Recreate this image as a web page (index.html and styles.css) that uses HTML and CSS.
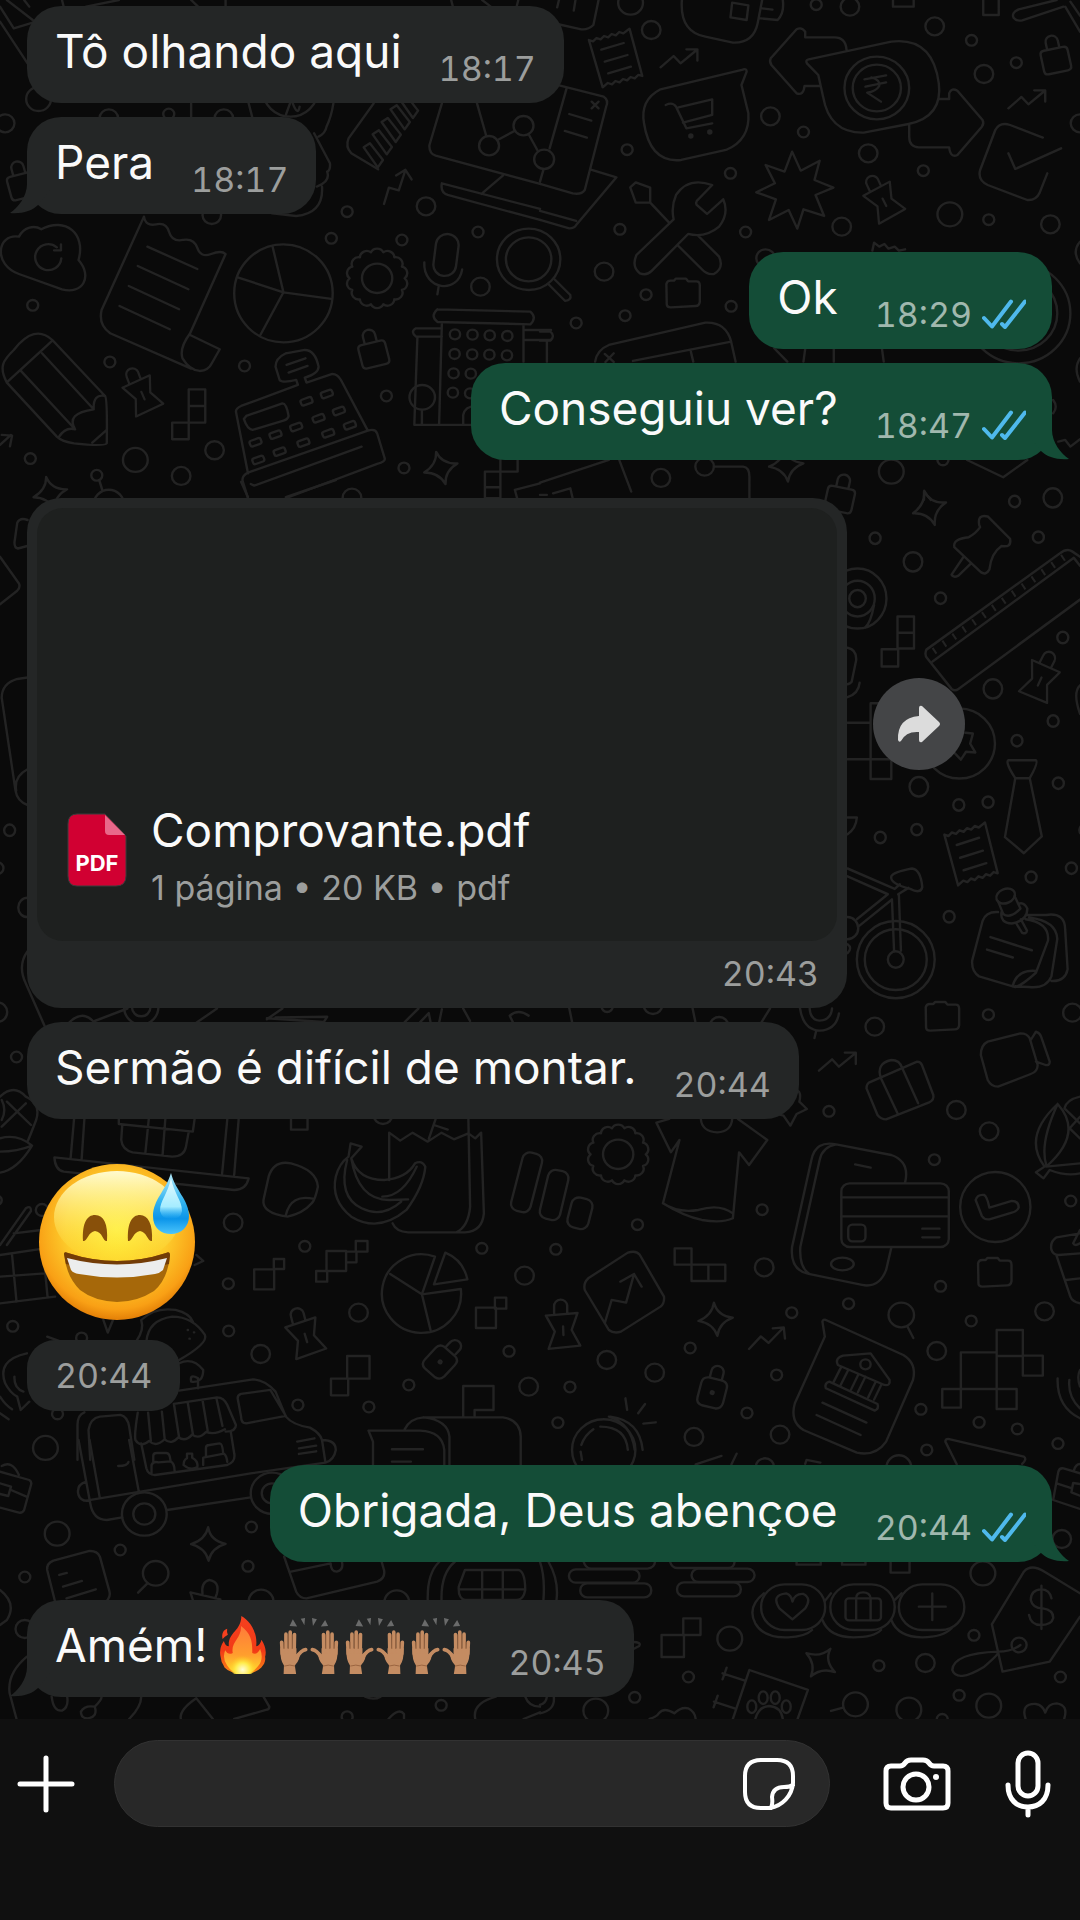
FILE: index.html
```
<!DOCTYPE html>
<html lang="pt-BR">
<head>
  <meta charset="UTF-8" />
  <meta name="viewport" content="width=device-width, initial-scale=1.0"/>
  <title>Conversa</title>
  <link rel="stylesheet" href="styles.css">
</head>
<body>

  <main class="chat">
    <!-- doodle wallpaper, drawn in tiles -->
    <svg class="wallpaper" viewBox="0 0 1080 1720" preserveAspectRatio="xMidYMin slice" aria-hidden="true">
      <defs>
        <circle id="s" r="16"/>
        <circle id="m" r="27"/>
        <circle id="l" r="36"/>
        <g id="gear"><circle r="44"/><path d="M80 0A20 20 0 0 1 72 35A20 20 0 0 1 50 63A20 20 0 0 1 18 78A20 20 0 0 1-18 78A20 20 0 0 1-50 63A20 20 0 0 1-72 35A20 20 0 0 1-80 0A20 20 0 0 1-72-35A20 20 0 0 1-50-63A20 20 0 0 1-18-78A20 20 0 0 1 18-78A20 20 0 0 1 50-63A20 20 0 0 1 72-35A20 20 0 0 1 80 0"/></g>
        <path id="lock" d="M-28-22h56q12 0 12 12v48q0 12-12 12h-56q-12 0-12-12v-48q0-12 12-12M-18-22v-22a18 18 0 0 1 36 0v22"/>
        <path id="padlock" d="M-20-42h40q18 2 18 20v46q-2 18-18 20h-40q-18-2-18-20v-46q0-18 18-20M-18-42v-22a18 18 0 0 1 36 0v22M-4 0a4 4 0 0 0 8 0a4 4 0 0 0-8 0"/>
        <path id="clip" d="M-26-50v-24a19 19 0 0 1 38-2v22M-50-46L42-54L25-3L50 44L-42 54L-24 2ZM0-14l1 26"/>
        <path id="zig" d="M0 0L38-34L58-12L105-52M75-54h32v34"/>
        <path id="spark" d="M-5-50Q5-10 50-5Q10 10 5 50Q-8 12-50 5Q-10-12-5-50Z"/>
        <path id="folder" d="M-48-30q2-10 12-10h10l5-6h30l6 8h24q10 0 10 12v50q-2 12-12 12l-72 4q-12 0-12-10z"/>
        <path id="note" d="M-78-55l12 4 10-10 12 4 10-10 12 4 10-10 12 4 10-10 12 4 18-14L77 53l-12-3-10 10-12-4-10 10-12-4-10 10-12-4-10 10-12-4-15 13zM-42-26l65-20M-32 10l66-20M-22 45l66-20"/>
        <rect id="key" x="-17" y="-9" width="34" height="18" rx="6" transform="rotate(-20)"/>
        <path id="bar" d="M0 0l18-12l38 50l-15 22z"/>
      </defs>

      <g transform="scale(.3444 .3333)">
        <use href="#s" x="490" y="342"/><use href="#s" x="1008" y="635"/><use href="#s" x="962" y="715"/><use href="#s" x="1167" y="720"/>
        <use href="#s" x="1388" y="696"/><use href="#s" x="95" y="916"/><use href="#s" x="319" y="1086"/><use href="#s" x="710" y="1098"/>
        <use href="#s" x="1122" y="1188"/><use href="#s" x="88" y="1376"/><use href="#s" x="1173" y="1404"/><use href="#s" x="281" y="1426"/>
        <use href="#m" x="15" y="370"/><use href="#m" x="1237" y="619"/><use href="#m" x="1395" y="860"/><use href="#m" x="623" y="1351"/>
        <use href="#m" x="526" y="1428"/><use href="#m" x="316" y="355"/><use href="#m" x="650" y="355"/><use href="#m" x="615" y="645"/>
        <use href="#m" x="1022" y="1493"/><use href="#l" x="112" y="297"/><use href="#l" x="393" y="1380"/>
        <path d="M0 65L80 190M0 20L40 85L95 68M20 0L95 60M250 20l95-20M70 0l15 20M180 0l5 20M555 0l20 20M655 0v20M1310 0l5 20M1400 0l25 20M1500 20l5-20"/>
        <path d="M555 350V310M722 310q5 20 10 40M968 310Q962 350 948 380Q945 400 925 410M912 400L958 490Q960 510 950 515Q960 545 920 560M935 560Q940 640 860 648L790 640"/>
        <circle cx="843" cy="270" r="80"/><path d="M830 345l12-35M850 310q15 40 20 10"/>
        <path d="M55 710C70 680 100 675 120 688C190 650 250 700 228 780C270 830 240 885 180 868L55 822C-20 795-10 700 55 710M178 775A38 39 0 1 1 165 742M177 733v18h-20"/>
        <path d="M418 650q5 30 35 23t38 23t40 24t42 24t40 18t42 0L552 1000Q520 1045 530 1075Q550 1110 580 1113Q605 1112 615 1090L638 1048L552 1005M555 1106L320 1000Q285 975 295 930L418 650M428 740l145 67M400 798l147 70M374 858l146 70M347 918l146 70"/>
        <ellipse cx="823" cy="880" rx="143" ry="147"/><path d="M791 738L823 877L690 832M962 897L823 877L756 1005"/>
        <use href="#gear" x="1095" y="835"/>
        <rect x="1262" y="702" width="66" height="126" rx="33" transform="rotate(7 1295 765)"/><path d="M1232 787C1228 870 1330 885 1342 808M1274 857L1270 883"/>
        <use href="#lock" transform="translate(1082 1050) rotate(-14)"/><use href="#lock" transform="translate(62 545) rotate(-15)"/>
        <use href="#clip" transform="translate(415 1188) rotate(-20) scale(.95)"/>
        <path d="M20 1148C-5 1100 10 1080 40 1050Q100 970 152 1020L305 1188Q312 1195 310 1330Q308 1340 215 1330Q180 1325 165 1310ZM22 1145L152 1022M60 1112L218 1288M122 1060L272 1228M170 1312Q190 1280 218 1288Q190 1240 272 1228Q270 1180 305 1188M268 1328L310 1290"/>
        <path d="M548 1168h48v100h-48zM548 1218h48M500 1268h48v50h-48z"/>
        <path d="M830 1060L885 1050Q915 1050 925 1100Q925 1120 885 1133l5 15L965 1122Q980 1122 990 1140L1068 1292Q1090 1285 1095 1300L1117 1375Q1120 1385 1095 1392L830 1495M1068 1292L720 1418M720 1420L685 1235Q685 1225 700 1218L865 1155l-5-15Q820 1150 812 1140L800 1100Q800 1075 830 1060M720 1418Q700 1430 705 1445L720 1495M728 1452l10 5L1050 1340M715 1248l105-38q12 0 18 38q-2 10-15 14l-90 28q-15-2-25-33zM832 1095l55-20M838 1118l55-20"/>
        <use href="#key" x="742" y="1327"/><use href="#key" transform="translate(800 1304)"/><use href="#key" x="860" y="1281"/><use href="#key" x="925" y="1255"/>
        <use href="#key" x="984" y="1233"/><use href="#key" x="890" y="1204"/><use href="#key" x="949" y="1182"/><use href="#key" x="750" y="1380"/>
        <use href="#key" x="812" y="1355"/><use href="#key" x="881" y="1328"/><use href="#key" x="953" y="1300"/><use href="#key" x="1016" y="1276"/>
        <use href="#zig" transform="translate(1115 612) rotate(-32)"/>
        <path d="M1270 928L1540 935q20 18 0 38L1270 966q-22-18 0-38M1283 970L1275 1275M1520 975v110M1205 1275h175M1212 1010L1203 1275M1225 1230v42M1283 985h-75q-18 10 0 25h75M1520 990h80M1520 1020h80M1345 1275v-30q5-25 35-27"/>
        <circle cx="1226" cy="1192" r="37"/>
        <g class="windows"><circle cx="1321" cy="1003" r="15"/><circle cx="1372" cy="1004" r="15"/><circle cx="1422" cy="1006" r="15"/><circle cx="1473" cy="1008" r="15"/><circle cx="1320" cy="1062" r="15"/><circle cx="1371" cy="1063" r="15"/><circle cx="1421" cy="1064" r="15"/><circle cx="1472" cy="1066" r="15"/><circle cx="1317" cy="1120" r="15"/><circle cx="1367" cy="1121" r="15"/><circle cx="1315" cy="1178" r="15"/><circle cx="1365" cy="1180" r="15"/></g>
        <path d="M1085 310L1012 415Q1002 440 1020 460L1098 508"/>
        <use href="#bar" x="1056" y="442"/><use href="#bar" x="1082" y="403"/><use href="#bar" x="1108" y="366"/><use href="#bar" x="1134" y="328"/><use href="#bar" x="1158" y="294"/>
        <path d="M1283 310L1247 435Q1245 460 1265 467L1568 552M1385 310L1412 408M1445 420L1495 392M1535 403L1560 450M1460 527L1398 582M1283 550Q1278 578 1300 585L1568 660M1283 550L1568 627"/>
        <circle cx="1420" cy="437" r="29"/><circle cx="1520" cy="377" r="29"/>
        <use href="#spark" transform="translate(1280 1404) rotate(-10)"/><use href="#spark" transform="translate(146 1480) rotate(-8)"/>
        <path d="M1408 1415h45v80h-45zM1408 1462h45M1453 1380v35h50v-38M0 1335l32-30M5 1305l30 2-6 32M1568 1450L1495 1470l8 30"/>
      </g>

      <g transform="translate(540 0) scale(.3444 .3333)">
        <use href="#s" x="802" y="14"/><use href="#s" x="1253" y="121"/><use href="#s" x="1383" y="188"/><use href="#s" x="765" y="396"/>
        <use href="#s" x="253" y="449"/><use href="#s" x="553" y="520"/><use href="#s" x="232" y="688"/><use href="#s" x="597" y="696"/>
        <use href="#s" x="1113" y="512"/><use href="#s" x="1303" y="659"/><use href="#s" x="308" y="884"/><use href="#s" x="247" y="947"/>
        <use href="#s" x="105" y="969"/><use href="#s" x="555" y="919"/><use href="#s" x="1170" y="1380"/>
        <use href="#m" x="323" y="90"/><use href="#m" x="900" y="20"/><use href="#m" x="1146" y="79"/><use href="#m" x="1289" y="222"/>
        <use href="#m" x="669" y="349"/><use href="#m" x="953" y="460"/><use href="#m" x="1482" y="673"/><use href="#m" x="876" y="680"/>
        <use href="#m" x="186" y="815"/><use href="#m" x="351" y="1434"/><use href="#m" x="1568" y="370"/><use href="#m" x="655" y="775"/>
        <use href="#m" x="478" y="1400"/><use href="#l" x="263" y="8"/><use href="#l" x="1190" y="643"/><use href="#l" x="1020" y="1415"/>
        <circle cx="-33" cy="778" r="92"/><circle cx="-33" cy="778" r="66"/><path d="M42 838L88 885q4 15-15 18L24 852"/>
        <use href="#note" x="220" y="175"/><use href="#zig" x="350" y="202"/><use href="#zig" x="1360" y="325"/>
        <use href="#folder" x="415" y="882"/><use href="#lock" transform="translate(1495 168) rotate(-12)"/><use href="#lock" transform="translate(873 1485) rotate(12)"/>
        <use href="#clip" transform="translate(1000 608) rotate(-24) scale(.95)"/><use href="#spark" x="715" y="1395"/>
        <path d="M50 255L185 290Q200 300 192 320L130 570Q120 585 95 580L0 552M78 262L28 445M0 545l10-36M85 342l64 20M72 393l64 20M150 305l20 20m0-20l-20 20M150 510L222 532L105 675Q100 685 85 685L0 660M0 633L105 663"/><circle cx="12" cy="478" r="29"/>
        <path d="M592 208L350 268Q290 300 302 370Q320 490 410 480L540 450Q610 420 605 340L585 255L600 215Q600 205 590 208M365 315q20-10 30 5L425 385L500 370M402 322L500 298V345L415 368"/>
        <circle class="dot" cx="438" cy="408" r="8"/><circle class="dot" cx="493" cy="396" r="8"/>
        <path d="M890 150Q888 112 855 112H770V95Q760 80 745 88L670 175Q665 185 672 195L745 280Q765 288 768 258H812M780 178L1020 125Q1140 110 1158 250Q1170 350 1070 372L940 398Q840 400 822 290L808 225L775 190Q770 180 780 178M942 238L1005 226M945 260L1005 247M962 232Q990 240 985 258Q975 275 950 278L990 305M1158 297H1188V280Q1195 262 1212 272L1285 360Q1290 370 1283 380L1212 465Q1192 475 1188 442H1100Q1072 440 1072 410V375"/>
        <circle cx="978" cy="264" r="94"/><circle cx="978" cy="264" r="70"/>
        <path d="M1460 413L1365 375Q1335 365 1322 390L1278 510Q1270 540 1300 555L1415 600Q1440 602 1450 580L1473 520M1360 460L1380 507L1513 445"/>
        <path d="M732 455L757 512L812 482L797 540L852 563L800 585L825 648L765 628L747 686L722 630L665 660L685 598L628 577L682 550L655 495L710 515z"/>
        <path d="M500 555Q430 530 395 585Q380 620 388 658L280 765Q265 800 290 820Q310 828 325 812L430 702Q480 715 520 680Q550 640 532 598L485 642L455 615Q450 605 460 598zM375 668L320 608H278L262 562L278 547L320 563V608M460 708L520 770Q535 805 505 822Q485 825 470 808L402 738"/>
        <path d="M0 995h30q15 12 0 27H0M20 1022v63M160 1085Q165 1050 200 1035L480 968Q540 965 555 1025L568 1085M270 1083L555 1025M438 1055L445 1085M188 1062l26 24m0-26l-24 26M965 752l5-24 15 12 15-8 12 14 18-6 12 12 18-4M680 1045l38 40M765 1085l5-38M853 1047v38M993 1047l5 38"/>
        <circle cx="1390" cy="940" r="150"/><circle cx="1390" cy="940" r="112"/><path d="M1568 725q-25 30 0 65M1568 1075q-20 30 0 70M1490 1240q15-20 0-40"/>
        <path d="M412 0Q405 95 480 110L560 128Q620 130 632 70L645 0M558 8l47 8l-5 44l-47-8zM645 25l30 4M640 55L690 60Q710 40 705 0M170 0L155 75Q140 90 120 88L50 72M50 22l5-22M98 32l5-32M1025 0v20h60V0M1287 0v45h45V0M1500 0L1390 28q-22 10-15 25q10 12 25 8L1520 20M1525 20L1568 95M1540 5l28 42"/>
        <path d="M0 1448L200 1380M230 1380L265 1475M0 1485h20M38 1480l50-15 8 35M505 1400H590Q608 1402 608 1430V1500M1240 1380L1345 1432L1415 1380M1505 1325l20-5 15 20 28-22M1115 1500v-25l20 25"/>
      </g>

      <g transform="translate(0 480) scale(.3444 .3571)">
        <use href="#s" x="28" y="981"/><use href="#s" x="-6" y="1087"/><use href="#m" x="80" y="1197"/><use href="#m" x="-6" y="1490"/>
        <path d="M80 112q-22-8-30 8L42 175q0 15 10 17l30-8M0 215L55 290Q60 300 50 310L0 348M80 553L50 557Q5 570 5 610L45 870Q50 900 80 910M80 810Q40 830 47 870M80 1320Q50 1360 75 1410L130 1530M200 1520q40-40 75 0M275 1515L370 1480M570 1520l60-40M775 1510L820 1480M775 1507L940 1518L950 1503L800 1505M1175 1518L1215 1480M1220 1518l25-25 5 25M1275 1520l8-38M1345 1480l20 35M1535 1500q-30-20-55 0l10 20"/>
        <circle cx="410" cy="1475" r="50"/><circle cx="410" cy="1475" r="27"/><circle cx="316" cy="72" r="45"/>
        <path d="M297 28L288 0M720 48L700 5M830 48L975 0"/>
      </g>

      <g transform="translate(540 480) scale(.3444 .3571)">
        <use href="#s" x="973" y="163"/><use href="#s" x="1378" y="60"/><use href="#s" x="1447" y="160"/><use href="#s" x="1163" y="331"/>
        <use href="#s" x="1518" y="441"/><use href="#s" x="1490" y="675"/><use href="#s" x="1385" y="730"/><use href="#s" x="1505" y="849"/>
        <use href="#s" x="1216" y="910"/><use href="#s" x="1301" y="902"/><use href="#s" x="988" y="1001"/><use href="#s" x="1094" y="979"/>
        <use href="#s" x="1426" y="1112"/><use href="#s" x="1543" y="1087"/><use href="#s" x="1188" y="1223"/><use href="#s" x="1582" y="980"/>
        <use href="#m" x="1489" y="50"/><use href="#m" x="1083" y="229"/><use href="#m" x="1315" y="585"/><use href="#m" x="1100" y="859"/>
        <use href="#spark" transform="translate(1131 78) rotate(-12)"/><use href="#clip" transform="translate(1450 565) rotate(28) scale(.95)"/><use href="#note" x="1252" y="1048"/>
        <path d="M1275 125Q1270 95 1300 102L1365 165Q1370 190 1340 185Q1310 205 1305 250Q1295 268 1280 258L1203 188Q1198 165 1245 160Q1265 150 1278 132zM1230 215L1195 265Q1200 275 1215 268L1250 235"/>
        <path d="M1568 215L1545 200Q1530 190 1510 205L1122 475Q1115 490 1125 500L1195 585Q1205 592 1215 585L1568 335M1140 508L1550 218L1568 240"/>
        <path class="ticks-row" d="M1143 480L1530 210"/>
        <circle cx="922" cy="332" r="84"/><circle cx="922" cy="332" r="50"/><circle cx="922" cy="332" r="24"/><path d="M970 350Q960 400 945 412"/>
        <path d="M1038 382h48v90h-48zM1038 428h48M992 474h48v48h-48zM893 470Q920 475 918 505L905 565Q900 570 893 572M893 608Q925 598 928 568M893 680h67M893 782h67M960 625v212h60v-55h-60M960 625h30"/>
        <ellipse cx="1218" cy="738" rx="103" ry="98"/><path d="M1235 708l22 2-8 28 15 25-27-2-15 22-20-20"/>
        <path d="M1360 785H1440Q1448 790 1422 835H1380Q1350 790 1360 785M1380 835L1350 1000L1405 1045L1457 998L1422 835"/>
        <ellipse cx="1033" cy="1343" rx="113" ry="108"/><ellipse cx="1033" cy="1343" rx="90" ry="85"/><circle cx="1033" cy="1343" r="23"/><circle cx="893" cy="1255" r="31"/>
        <path d="M893 1110L1010 1160L920 1230M893 1088L1030 1145L1045 1132M1022 1175L1028 1318M1042 1160L1048 1318M1022 1175L925 1250M1040 1160L1070 1142M1020 1110Q1025 1098 1080 1088Q1105 1090 1110 1140Q1105 1160 1075 1145Q1015 1130 1020 1110M893 945h27Q918 975 893 992M893 1300q15 10 0 25"/>
        <path d="M1330 1210Q1295 1208 1285 1235L1255 1345Q1252 1375 1275 1390L1380 1420Q1400 1415 1440 1380L1475 1290Q1480 1240 1410 1230M1410 1218H1470Q1525 1210 1525 1260L1532 1370Q1525 1405 1485 1403M1420 1225Q1500 1235 1502 1285L1485 1390Q1470 1425 1420 1420L1380 1418M1372 1418Q1385 1370 1440 1375M1308 1280l120 37M1298 1315l75 22M1330 1180L1345 1215Q1365 1230 1395 1200L1378 1165M1340 1210Q1335 1240 1370 1242Q1415 1235 1415 1200Q1405 1180 1388 1187M1382 1240l18 28q12 5 14-6l-18-32"/>
        <ellipse cx="1352" cy="1165" rx="28" ry="20" transform="rotate(-20 1352 1165)"/><path d="M1568 575q-22 20 0 80"/>
      </g>

      <g transform="translate(0 1000) scale(.3444 .3333)">
        <use href="#s" x="48" y="171"/><use href="#s" x="885" y="739"/><use href="#s" x="663" y="851"/><use href="#s" x="664" y="993"/>
        <use href="#s" x="1399" y="745"/><use href="#s" x="37" y="979"/><use href="#s" x="865" y="1215"/><use href="#s" x="1071" y="1221"/>
        <use href="#s" x="1187" y="1155"/><use href="#s" x="1478" y="1054"/><use href="#s" x="237" y="1014"/><use href="#s" x="167" y="1242"/>
        <use href="#m" x="677" y="668"/><use href="#m" x="1041" y="938"/><use href="#m" x="757" y="1062"/><use href="#m" x="1523" y="827"/>
        <use href="#m" x="1535" y="1160"/><use href="#m" x="1112" y="345"/><use href="#l" x="132" y="1344"/>
        <use href="#clip" transform="translate(888 1015) rotate(-14)"/><use href="#padlock" transform="translate(1278 1086) rotate(42)"/>
        <path d="M215 357L205 475M245 357L237 478M345 357v15L560 395L565 357M355 375L352 420Q355 450 385 457L500 470Q535 470 540 440L548 395M432 357L422 460M480 357L472 466M660 357L645 520M693 357L680 525M158 472Q160 510 185 515L680 570Q715 570 722 535z"/>
        <path d="M780 530Q795 480 845 490Q920 510 923 560Q915 600 905 610Q880 640 835 650Q760 640 765 600zM830 645Q845 580 912 597"/>
        <path d="M1018 430L1050 440L1020 475Q1040 540 1115 540Q1180 535 1205 490Q1225 480 1235 500Q1230 560 1180 630Q1100 700 1020 650Q960 600 975 530Q985 490 1012 470zM1020 475Q1040 600 1130 600L1185 598M1008 480Q980 590 1050 625Q1110 655 1165 605M1210 500Q1170 590 1110 590"/>
        <path d="M1130 540V398L1162 422L1198 398L1242 425L1282 398L1318 418L1360 400L1380 415L1397 398L1405 640Q1400 695 1350 697H1185Q1150 695 1140 670M1360 357L1365 620Q1360 680 1325 697M1265 357l-20 60M1260 375l40 14"/>
        <path d="M795 777h30v30h-30zM738 808h58v60h-58zM1033 723h34v32h-34zM948 753h57v60h-57zM1005 755h30v32h-30zM918 813h32v32h-32zM1437 893h33v33h-33zM1382 923h58v61h-58zM1008 1068h65v68h-65zM961 1136h50v50h-50zM845 357v32h48v-32"/>
        <path d="M1263 770A115 118 0 1 0 1338 867L1225 883zM1225 883L1133 822M1225 883L1250 990M1293 758Q1345 780 1357 838L1260 853z"/>
        <path d="M0 290Q40 250 75 290Q120 310 105 360Q90 400 80 425M20 305l70 70M75 310l-70 70M5 300q15 30 0 60M0 415Q50 400 93 437Q50 510 0 518M0 455Q50 455 93 437M0 735L75 625q15-10 15 8L20 735M0 765L130 745M40 700l80-10M0 830L130 820M0 910L160 890M35 765L48 905M125 750L138 890M570 765l20 18-25 12M300 960l13 38 15-38M0 590q10 10 0 22"/>
        <circle cx="122" cy="630" r="18"/>
        <path d="M78 1060Q-10 1080 15 1150Q30 1180 50 1190L60 1230L85 1205M42 1130Q40 1165 68 1175M0 1190q15 25 35 38M0 1240l25 18M137 1010l40 15"/>
        <path d="M395 1025Q420 990 410 960Q450 920 510 930Q550 940 560 965M425 1025Q430 960 500 950Q560 950 595 1005Q605 1030 520 1080M520 1090Q560 1070 590 1110Q590 1150 555 1145Q550 1120 575 1135V1165M545 990h1M563 997h1M550 1016h1"/>
        <path d="M225 1380V1275Q225 1245 245 1237M262 1380L257 1290Q262 1255 290 1250L350 1245Q370 1250 375 1280L390 1380M520 1172L735 1138Q770 1140 800 1175L830 1250Q850 1275 900 1283Q930 1300 935 1320M690 1195Q690 1185 700 1182L785 1170L830 1248L715 1270Q700 1270 700 1250zM505 1212L630 1192Q650 1192 660 1215L685 1275Q685 1295 655 1295M400 1238Q390 1300 393 1320q15 25 40 3q20 20 45-5q20 18 40-6q20 15 40-8q20 15 40-8q25 10 55-8M505 1212l15 100M545 1207l15 95M588 1200l15 92M628 1193l18 85M430 1238l8 85M470 1235l8 80M863 1325l50-10M868 1345l50-8M868 1362l50-8"/>
        <path d="M1345 1252v-94h88v72h-55v22M1175 1288Q1190 1255 1230 1252H1460Q1510 1260 1512 1310V1500M1230 1252Q1300 1260 1305 1310V1510M1070 1292H1220Q1285 1295 1290 1350V1510M1070 1292L1083 1325V1510M1138 1348h90M1138 1385h55"/>
      </g>

      <g transform="translate(540 1000) scale(.3444 .3333)">
        <use href="#s" x="1302" y="44"/><use href="#s" x="839" y="334"/><use href="#s" x="1145" y="479"/><use href="#s" x="1541" y="603"/>
        <use href="#s" x="645" y="629"/><use href="#s" x="283" y="674"/><use href="#s" x="46" y="748"/><use href="#s" x="1163" y="859"/>
        <use href="#s" x="896" y="911"/><use href="#s" x="731" y="938"/><use href="#s" x="1252" y="963"/><use href="#s" x="436" y="1044"/>
        <use href="#s" x="87" y="1161"/><use href="#s" x="687" y="1125"/><use href="#s" x="601" y="1239"/><use href="#s" x="1106" y="1228"/>
        <use href="#s" x="1275" y="1267"/><use href="#s" x="1386" y="1287"/><use href="#s" x="1123" y="1350"/><use href="#s" x="1504" y="1331"/><use href="#s" x="52" y="1268"/>
        <use href="#m" x="972" y="80"/><use href="#m" x="1546" y="38"/><use href="#m" x="1209" y="330"/><use href="#m" x="1304" y="394"/>
        <use href="#m" x="651" y="802"/><use href="#m" x="1465" y="934"/><use href="#m" x="1152" y="1053"/><use href="#m" x="194" y="1080"/>
        <use href="#m" x="333" y="1118"/><use href="#m" x="447" y="1311"/><use href="#m" x="697" y="1304"/><use href="#m" x="653" y="1402"/>
        <use href="#s" x="195" y="20"/><use href="#m" x="328" y="15"/><use href="#m" x="520" y="78"/><use href="#l" x="1042" y="1402"/>
        <use href="#gear" x="227" y="463"/><use href="#folder" x="1168" y="52"/><use href="#folder" x="1320" y="820"/>
        <use href="#zig" x="810" y="212"/><use href="#zig" transform="translate(607 1047) rotate(-6)"/><use href="#clip" x="67" y="993"/>
        <use href="#spark" x="510" y="958"/><use href="#padlock" transform="translate(500 1178) rotate(14)"/>
        <rect x="-68" y="457" width="58" height="180" rx="22" transform="rotate(14 -39 547)"/><rect x="11" y="510" width="60" height="150" rx="22" transform="rotate(13 41 585)"/><rect x="85" y="594" width="62" height="92" rx="22" transform="rotate(14 116 640)"/>
        <path d="M375 357L338 368L380 457L405 420L357 610Q420 650 470 660Q530 670 560 655L578 457L607 495L660 420L575 357M357 610Q400 640 460 630Q520 610 560 640M467 357Q470 395 515 397Q555 395 558 357"/>
        <path d="M1300 125L1395 100Q1415 100 1422 115L1445 195Q1445 215 1425 222L1330 260Q1310 260 1300 240L1280 165Q1280 135 1300 125M1425 120L1440 95q12 5 15 15L1480 185q0 12-12 10L1440 185"/>
        <path d="M955 248L1095 185q10 0 14 10L1142 285Q1145 300 1130 307L1005 358Q990 358 980 345L948 265q0-12 7-17M990 235Q975 190 1020 180Q1045 180 1052 205M990 235L1038 340M1052 205L1098 310"/>
        <path d="M1060 548Q1075 485 1020 465L860 433Q800 420 788 480L732 740Q725 810 780 822L935 855Q985 865 1005 810L1020 743M860 433Q820 440 812 480L756 740Q752 800 780 820M915 493l45 10M875 592h312M875 649h312M1110 686h50M1110 712h50"/>
        <ellipse cx="878" cy="792" rx="33" ry="19"/><rect x="875" y="550" width="312" height="191" rx="24"/><rect x="895" y="674" width="50" height="50" rx="12"/>
        <ellipse cx="1322" cy="621" rx="102" ry="105"/><path d="M1265 600q5-18 25-15q8 5 15 38l65-20q20 0 20 20q-5 12-20 15l-65 20q-15 2-22-10z"/>
        <path d="M1503 312Q1400 410 1465 500L1440 517L1462 535L1480 510Q1530 530 1568 520M1503 312Q1450 430 1470 495M1503 312Q1580 400 1470 500L1568 490M1568 290q-40 10-45 35l45 45M1568 350l-30 35 30 30"/>
        <path d="M140 835L255 758Q280 750 290 765L360 890Q362 910 350 920L235 995Q215 1002 200 990L130 870Q125 850 140 835M188 970L208 900L250 908L273 822M233 845L273 822L295 860"/>
        <path d="M391 745h49v49h-49zM440 794h98v49h-98zM489 794v49"/><circle cx="1049" cy="945" r="37"/><path d="M1066 978l18 36"/>
        <path d="M830 960L1055 1065Q1095 1090 1083 1140L1005 1325Q975 1370 920 1358L765 1290Q725 1265 740 1210L827 1010L820 965q2-8 10-5M880 1067L960 1060L1015 1140Q1018 1158 1000 1155L865 1095Q855 1075 880 1067zM840 1145L980 1212q5 15-8 20L830 1165q-5-15 10-20M875 1100l-22 45M895 1110l-22 45M925 1122l-22 47M945 1130l-22 47M975 1145l-22 47M992 1152l-22 47M820 1208l128 60M803 1245l128 60"/><circle cx="945" cy="1093" r="15"/>
        <path d="M1326 990h76v78h-76zM1402 1067h58v60h-58zM1222 1057h104v110h-104zM1168 1167h54v56h-54zM1326 1167h58v60h-58z"/>
        <path d="M1568 700L1500 712Q1480 725 1485 750Q1490 765 1505 765L1568 760M1500 768L1540 890Q1545 905 1568 910M1527 840L1568 835M1568 690l-20 40q5 10 20 0M1568 1255Q1500 1220 1503 1135M1568 1225Q1532 1190 1537 1140M1568 1110q-10 20 0 50"/>
        <circle cx="185" cy="1350" r="92"/><path d="M175 1280Q250 1280 255 1350M120 1335q10-30 35-47M118 1355l4 25M205 1250Q290 1262 298 1350M200 1250Q265 1270 275 1350M248 1195l5 35M285 1240l20-28M300 1271l36-4"/>
        <path d="M755 25Q765 90 812 92Q860 90 868 40M783 25Q785 60 812 62Q845 60 848 25M802 92l-5 22M745 270q15 5 8 35l22 22-30 15-18 35-20-30-20-5M1210 1393L1177 1325q0-8 8-8L1405 1370q10 8-5 22M452 1393l75-25M556 1393l15-32M770 1392l4-12 40 8M85 25l8 40M443 25l8 40M668 25l-25 42"/>
      </g>

      <g transform="translate(0 1440) scale(.3444 .3333)">
        <use href="#s" x="349" y="330"/><use href="#s" x="72" y="411"/><use href="#s" x="720" y="379"/><use href="#s" x="730" y="261"/>
        <use href="#s" x="1281" y="796"/><use href="#s" x="1008" y="830"/><use href="#l" x="166" y="281"/><use href="#l" x="758" y="485"/>
        <use href="#l" x="1152" y="487"/><use href="#m" x="72" y="567"/><use href="#spark" transform="translate(605 312) rotate(5)"/>
        <path d="M0 95L85 120q8 5 5 15L70 210q-5 10-15 8L0 203M5 78Q35 60 55 105M0 130l32 10-8 28L0 162M32 150l45 20"/>
        <path d="M228 0L262 190Q270 240 310 240L355 232M260 0L290 175M375 0L403 155M250 182L728 100L945 68L935 0M485 210L728 172M250 125Q220 135 228 165Q235 185 258 182M410 10L425 85Q430 105 450 105L660 75Q685 65 680 40L670-25M935 0Q975 0 975 30Q970 60 945 68M343 78q28 0 30-12M440 100v-25q5-12 20-8l35-3q12 5 12 30M445 65v-18q0-8 10-8h28q10 0 12 22M590 75v-22l60-12q8 5 10 25M598 48v-25q0-8 10-8l30-5q8 0 10 30M533 75q0-15 10-20v-14h15v12q18 10 15 28q-20 12-40-6"/>
        <circle cx="419" cy="222" r="65"/><circle cx="419" cy="222" r="32"/><circle cx="790" cy="160" r="62"/><circle cx="790" cy="160" r="30"/>
        <path d="M160 485L137 390Q135 370 155 362L260 333Q282 332 290 350L318 455Q322 470 308 485M172 405l22-6M183 440l55-17M193 475l85-27M428 430l-27 28M560 480L553 457L640 478M588 462q-5-35 20-42q30 5 22 40l-5 15"/><circle cx="452" cy="400" r="37"/>
        <path d="M825 350L860 455Q870 475 890 475L1095 425Q1120 415 1115 390L1108 365M845 395L960 370q0 25 18 25q20-5 15-28M1242 480Q1240 400 1275 366M1282 480Q1280 400 1320 366M1350 390H1505Q1525 395 1525 450Q1520 480 1500 480H1350Q1330 475 1332 440zM1332 448h192M1400 390v90M1460 390v90M0 450Q50 490 20 540L0 555"/>
        <path d="M78 650Q20 700 28 760L48 837M375 837Q410 800 410 770M150 770q5 45 30 42q20-10 15-42M235 815q10-20 40-15q10 30-20 35q-20 0-20-20M275 800q20-20 20-30M525 837Q520 810 570 775L618 837M765 770L782 800q0 8-10 10L680 837M1380 837Q1370 790 1440 770M1525 770q10 30 43 30M1520 837l48-20M1128 837q30-35 45-15v15M1060 770q25 12 45 0"/>
      </g>

      <g transform="translate(540 1440) scale(.3444 .3333)">
        <use href="#s" x="1260" y="586"/><use href="#s" x="984" y="677"/><use href="#s" x="1511" y="711"/><use href="#s" x="431" y="711"/>
        <use href="#s" x="275" y="772"/><use href="#s" x="1217" y="766"/><use href="#s" x="1168" y="838"/><use href="#m" x="1119" y="669"/><use href="#m" x="1515" y="297"/>
        <use href="#l" x="1286" y="400"/><use href="#l" x="551" y="596"/><use href="#l" x="162" y="812"/><use href="#l" x="916" y="793"/>
        <use href="#l" x="1071" y="809"/><use href="#l" x="1303" y="797"/><use href="#spark" transform="translate(815 668) rotate(40)"/>
        <rect x="84" y="388" width="205" height="40" rx="20"/><rect x="117" y="430" width="206" height="42" rx="20"/><rect x="440" y="386" width="183" height="40" rx="20"/><rect x="398" y="427" width="185" height="42" rx="20"/>
        <path d="M127 366q5 18 20 20h165q20-2 22-20M378 366q5 18 20 18h150q15 0 17-18M745 366v8h70v-8M877 366v8h68v-8M1018 366v32h55v-32M0 366Q15 410 10 480M25 366Q55 420 48 480"/>
        <rect x="642" y="433" width="186" height="137" rx="68"/><rect x="843" y="433" width="187" height="137" rx="68"/><rect x="1042" y="433" width="190" height="137" rx="68"/>
        <path d="M650 460Q600 500 625 550Q650 595 720 592Q770 590 790 570M845 460L828 482M820 540Q840 592 910 592Q970 592 990 570M1050 460l-22 22M1020 540Q1040 592 1110 592Q1170 592 1195 565M733 538L695 505Q670 465 715 460Q730 465 733 485Q740 460 765 462Q790 475 770 505zM918 475v65M960 475v65M918 475q0-18 20-18q20 0 22 18M1100 500h78M1139 460v80"/><rect x="887" y="475" width="103" height="66" rx="10"/>
        <path d="M1568 460L1465 395Q1425 370 1405 395L1312 553L1343 695L1480 665L1568 530M1456 437v130M1485 475Q1480 448 1455 448Q1425 450 1425 480Q1430 505 1460 505Q1492 510 1490 535Q1485 555 1455 555Q1425 555 1420 525M1395 615Q1370 635 1330 635Q1200 640 1197 690Q1210 730 1290 680Q1330 645 1330 637"/><circle cx="1391" cy="615" r="22"/>
        <path d="M416 535h50v50h-50zM353 585h65v66h-65zM560 837L608 690L778 750L748 837M595 722L530 700M542 683l-12 35M565 805L505 785M516 767l-12 35M625 837Q635 800 665 798Q700 800 705 837M880 803l-35 10M1410 837Q1395 790 1440 792Q1460 795 1467 818Q1475 790 1500 790Q1535 795 1522 837M318 837Q340 830 345 820Q360 800 390 820Q410 800 430 805Q450 815 452 837"/>
        <ellipse cx="648" cy="773" rx="13" ry="19"/><ellipse cx="683" cy="773" rx="13" ry="19"/><ellipse cx="615" cy="800" rx="13" ry="19"/><ellipse cx="715" cy="800" rx="13" ry="19"/>
        <path d="M1568 100L1520 85q-12-2-15 10L1490 180L1568 207M1500 130l45 15M1568 132l-20-3-5 28 25 10M1550 92q5-20 18-20M270 606q25 0 18 12l-18 10M0 820Q45 810 40 770M0 795q18-5 20-25"/>
      </g>
    </svg>

    <div class="message in">
      <p>Tô olhando aqui</p>
      <time>18:17</time>
    </div>
    <div class="message in">
      <p>Pera</p>
      <time>18:17</time>
      <svg class="tail" viewBox="0 0 40 44" aria-hidden="true"><path d="M17 0V14C17 26 8 38 0 43C12 44 22 41 28 35L40 20V0z"/></svg>
    </div>

    <div class="message out start">
      <p>Ok</p>
      <time>18:29</time>
      <svg class="read" viewBox="0 0 44 30" role="img" aria-label="Lida"><path d="M2 19l8 8.500L29 2.500M20 25l3 3L43 2.500"/></svg>
    </div>
    <div class="message out">
      <p>Conseguiu ver?</p>
      <time>18:47</time>
      <svg class="read" viewBox="0 0 44 30" role="img" aria-label="Lida"><path d="M2 19l8 8.500L29 2.500M20 25l3 3L43 2.500"/></svg>
      <svg class="tail" viewBox="0 0 40 44" aria-hidden="true"><path d="M17 0V14C17 26 8 38 0 43C12 44 22 41 28 35L40 20V0z"/></svg>
    </div>

    <div class="file-row start">
      <article class="file">
        <a class="file-preview" href="#comprovante">
          <svg class="pdf" viewBox="0 0 60 74" aria-hidden="true">
            <path d="M10 1H38L59 23V63Q59 73 49 73H10Q1 73 1 63V11Q1 1 10 1z" fill="#d10032" stroke="#3a3d3c"/>
            <path d="M38 2V18Q38 22 42 22H58z" fill="#e8688a"/>
            <text x="30" y="58" text-anchor="middle">PDF</text>
          </svg>
          <span class="file-text">
            <span class="file-name">Comprovante.pdf</span>
            <span class="file-info">1 página • 20 KB • pdf</span>
          </span>
        </a>
        <time>20:43</time>
      </article>
      <button class="forward" aria-label="Encaminhar">
        <svg viewBox="0 0 44 38" aria-hidden="true"><path d="M22 11V3Q22 0 25 1L42 17Q44 19 42 21L25 37Q22 38 22 35V27Q9 26 4 36Q2 38 1 35Q0 13 22 11z"/></svg>
      </button>
    </div>
    <div class="message in">
      <p>Sermão é difícil de montar.</p>
      <time>20:44</time>
    </div>

    <div class="sticker">
      <svg class="grin" viewBox="0 0 157 157" role="img" aria-label="Sorriso com gota de suor">
        <defs>
          <radialGradient id="face" cx=".5" cy=".42" r=".6">
            <stop offset="0" stop-color="#ffee38"/><stop offset=".55" stop-color="#fdcb2b"/><stop offset=".85" stop-color="#f9a015"/><stop offset="1" stop-color="#dd7603"/>
          </radialGradient>
          <linearGradient id="shine" x2="0" y2="1"><stop offset="0" stop-color="#fffbd0"/><stop offset="1" stop-color="#ffee38" stop-opacity="0"/></linearGradient>
          <linearGradient id="drop" x2="0" y2="1"><stop offset="0" stop-color="#b5ebfb"/><stop offset=".45" stop-color="#35b5f0"/><stop offset=".75" stop-color="#0b95ea"/><stop offset="1" stop-color="#4cc5fb"/></linearGradient>
          <linearGradient id="gloss" x2="0" y2="1"><stop offset="0" stop-color="#e8fbff"/><stop offset=".7" stop-color="#a5ecff"/><stop offset="1" stop-color="#40baf8" stop-opacity="0"/></linearGradient>
        </defs>
        <circle cx="78" cy="79" r="78" fill="url(#face)"/>
        <ellipse cx="78" cy="54" rx="63" ry="46" fill="url(#shine)"/>
        <path d="M44 78C43 60 48 52 56 52C65 52 69 61 68 78C64 79 64 69 56 68C49 69 48 79 44 78zM89 78C88 60 93 52 101 52C109 52 114 61 113 78C109 79 108 69 101 68C94 69 93 79 89 78z" fill="#88500a"/>
        <path d="M25 91Q25 88 29 90Q78 106 127 90Q131 88 131 92Q129 116 115 128Q98 139 78 139Q55 138 41 127Q27 113 25 91z" fill="#a6680a"/>
        <path d="M25 91Q25 88 29 90Q78 106 127 90Q131 88 131 92L130 101Q78 112 27 101z" fill="#733c07"/>
        <path d="M28 95Q78 108 128 95L124 107Q121 110 116 111Q78 118 40 111Q34 110 32 107z" fill="#eceded"/>
        <path d="M132 10C127 27 114 37 114 53C114 65 122 71 132 71C142 71 150 64 150 53C150 37 136 27 132 10z" fill="url(#drop)"/>
        <path d="M132 15C129 31 121 37 121 48Q123 56 132 56Q142 56 143 48C143 37 135 31 132 15z" fill="url(#gloss)"/>
      </svg>
      <div class="stamp"><time>20:44</time></div>
    </div>

    <div class="message out start sent">
      <p>Obrigada, Deus abençoe</p>
      <time>20:44</time>
      <svg class="read" viewBox="0 0 44 30" role="img" aria-label="Lida"><path d="M2 19l8 8.500L29 2.500M20 25l3 3L43 2.500"/></svg>
      <svg class="tail" viewBox="0 0 40 44" aria-hidden="true"><path d="M17 0V14C17 26 8 38 0 43C12 44 22 41 28 35L40 20V0z"/></svg>
    </div>

    <div class="message in start">
      <p>Amém!<span class="emojis"><svg viewBox="-20 0 180 176" role="img" aria-label="Fogo">
          <defs>
            <linearGradient id="fire" x2="0" y2="1"><stop offset="0" stop-color="#f5401f"/><stop offset=".6" stop-color="#f23a16"/><stop offset="1" stop-color="#f98a16"/></linearGradient>
            <linearGradient id="blaze" x2="0" y2="1"><stop offset="0" stop-color="#ff7a3a"/><stop offset=".6" stop-color="#ff9e2e"/><stop offset="1" stop-color="#ffdf2b"/></linearGradient>
            <radialGradient id="core" cy=".75"><stop offset="0" stop-color="#fffcd8"/><stop offset=".5" stop-color="#ffec4c"/><stop offset="1" stop-color="#ffc81e" stop-opacity="0"/></radialGradient>
          </defs>
          <path d="M65 0C90 14 115 48 110 92Q122 90 126 72Q144 100 137 124Q139 135 134 145L125 157Q105 176 69 176Q30 174 14 156L10 148Q4 140 3 128Q-5 100 12 76Q16 92 27 92C24 48 64 48 65 0z" fill="url(#fire)"/>
          <path d="M8 70C4 52 12 42 22 39Q20 52 24 57Q14 62 8 70z" fill="#f5401f"/>
          <path d="M64 30C96 54 99 80 98 112Q112 120 122 100Q134 130 116 152Q98 175 68 175Q36 174 22 150Q6 128 16 104Q25 120 39 112C32 78 66 68 64 30z" fill="url(#blaze)"/>
          <ellipse cx="69" cy="142" rx="44" ry="42" fill="url(#core)"/>
        </svg><svg viewBox="0 0 180 176" role="img" aria-label="Mãos para cima">
          <defs>
            <g id="hand">
              <path class="skin" d="M3 98H52V116L60 110Q66 130 47 150L51 176H13L14 150Q2 135 3 98z"/>
              <path class="finger" d="M7 80L9 115M20 55V110M33 49V110M46 56L45 110M80 102Q66 104 54 124"/>
              <path class="crease" d="M14 78V100M27 56V100M39 56V100M15 152Q32 146 48 152"/>
            </g>
            <g id="hands">
              <path class="rays" d="M41 10L31 30L54 32zM65 8L78 6L76 28zM99 6L114 10L102 30zM139 12L148 30L126 32z"/>
              <use href="#hand"/><use href="#hand" transform="matrix(-1 0 0 1 180 0)"/>
            </g>
          </defs>
          <use href="#hands"/>
        </svg><svg viewBox="0 0 180 176" role="img" aria-label="Mãos para cima"><use href="#hands"/></svg><svg viewBox="0 0 180 176" role="img" aria-label="Mãos para cima"><use href="#hands"/></svg></span></p>
      <time>20:45</time>
      <svg class="tail" viewBox="0 0 40 44" aria-hidden="true"><path d="M17 0V14C17 26 8 38 0 43C12 44 22 41 28 35L40 20V0z"/></svg>
    </div>
  </main>

  <footer class="composer">
    <button class="icon plus" aria-label="Anexar">
      <svg viewBox="0 0 58 58"><path d="M3 29H55M29 3V55"/></svg>
    </button>
    <div class="field">
      <input type="text" aria-label="Mensagem">
      <button class="icon" aria-label="Figurinhas">
        <svg class="stickers" viewBox="0 0 52 52"><path d="M18 2H34Q50 2 50 18V25C49 38 39 48 27 50H18Q2 50 2 34V18Q2 2 18 2zM28 50Q30 46 29 39Q30 29 41 29Q47 29 50 27"/></svg>
      </button>
    </div>
    <button class="icon camera" aria-label="Câmera">
      <svg viewBox="0 0 68 54"><path d="M8 9H17Q20 9 22 6Q24 3 28 3H40Q44 3 46 6Q48 9 51 9H60Q65 9 65 14V46Q65 51 60 51H8Q3 51 3 46V14Q3 9 8 9z"/><circle cx="33" cy="30" r="13"/><circle class="flash" cx="53" cy="20" r="3"/></svg>
    </button>
    <button class="icon mic" aria-label="Gravar áudio">
      <svg viewBox="0 0 46 68"><rect x="13" y="3" width="20" height="43" rx="10"/><path d="M3 35C3 50 12 57 23 57C34 57 43 50 43 35M23 57V65"/></svg>
    </button>
  </footer>

</body>
</html>
```
FILE: styles.css
```
* {
  box-sizing: border-box;
}

body {
  margin: 0;
  min-height: 100vh;
  display: flex;
  flex-direction: column;
  background: #101010;
  color: #fafafa;
  font-family: Inter, 'Liberation Sans', sans-serif;
  font-size: 46px;
  line-height: 58px;
}

p {
  margin: 0;
}

button {
  padding: 0;
  border: none;
  background: none;
  cursor: pointer;
}

svg {
  display: block;
}

/* chat */

.chat {
  position: relative;
  flex: 1;
  display: flex;
  flex-direction: column;
  align-items: flex-start;
  gap: 14px;
  padding: 6px 28px 22px 27px;
  background: #0a0a0a;
  overflow: hidden;
}

.wallpaper {
  position: absolute;
  top: 0;
  left: 0;
  width: 100%;
  height: 100%;
  fill: none;
  stroke: #232323;
  stroke-width: 7;
  stroke-linecap: round;
  stroke-linejoin: round;
}

.wallpaper .dot {
  fill: #232323;
  stroke: none;
}

.wallpaper .ticks-row {
  stroke-width: 20;
  stroke-linecap: butt;
  stroke-dasharray: 6 29;
}

.message {
  position: relative;
  display: flex;
  align-items: flex-end;
  padding: 16px 28px 13px;
  border-radius: 34px;
}

.message p {
  padding-bottom: 10px;
  margin-right: 37px;
}

.in {
  background: #242626;
}

.out {
  align-self: flex-end;
  padding-right: 26px;
  background: #144d37;
}

.start {
  margin-top: 24px;
}

time {
  font-size: 34px;
  line-height: 42px;
  font-variant-numeric: tabular-nums;
  color: #9c9e9d;
}

.out time {
  color: #a0b8ae;
}

.read {
  width: 44px;
  height: 30px;
  margin: 0 0 7px 10px;
  fill: none;
  stroke: #4fb9ec;
  stroke-width: 4;
  stroke-linecap: round;
  stroke-linejoin: round;
}

.tail {
  position: absolute;
  left: -17px;
  bottom: 0;
  width: 40px;
  height: 44px;
  fill: #242626;
}

.out .tail {
  left: auto;
  right: -17px;
  fill: #144d37;
  transform: scaleX(-1);
}

/* pdf message */

.file-row {
  position: relative;
  align-self: stretch;
  display: flex;
  align-items: center;
  gap: 26px;
}

.file {
  flex: 0 1 820px;
  display: flex;
  flex-direction: column;
  padding: 10px 10px 13px;
  border-radius: 34px;
  background: #242626;
}

.file-preview {
  display: flex;
  align-items: flex-start;
  gap: 24px;
  padding: 293px 30px 32px;
  border-radius: 26px;
  background: #1e201f;
  color: inherit;
  text-decoration: none;
}

.pdf {
  width: 60px;
  height: 74px;
  margin-top: 12px;
}

.pdf text {
  fill: #fff;
  font-size: 22px;
  font-weight: 700;
}

.file-text {
  display: flex;
  flex-direction: column;
  gap: 8px;
}

.file-info {
  font-size: 34px;
  line-height: 42px;
  color: #9c9e9d;
}

.file time {
  align-self: flex-end;
  margin: 12px 18px 0;
}

.forward {
  width: 92px;
  height: 92px;
  margin-bottom: 58px;
  display: grid;
  place-items: center;
  border-radius: 50%;
  background: #444547;
}

.forward svg {
  width: 44px;
  height: 38px;
  fill: #dcdcdc;
}

/* lone emoji */

.sticker {
  position: relative;
  margin-top: 30px;
}

.grin {
  width: 157px;
  height: 157px;
  margin: 0 0 20px 12px;
}

.stamp {
  display: inline-flex;
  padding: 15px 28px 14px;
  border-radius: 28px;
  background: #242626;
}

.sent {
  margin-top: 40px;
}

.emojis {
  display: inline-flex;
  gap: 6px;
  margin-left: 6px;
  vertical-align: -12px;
}

.emojis svg {
  width: 60px;
  height: 58px;
}

.skin {
  fill: #c48c62;
}

.finger {
  fill: none;
  stroke: #c48c62;
  stroke-width: 11;
  stroke-linecap: round;
}

.crease {
  fill: none;
  stroke: #9a6440;
  stroke-width: 3;
}

.rays {
  fill: #6a6b6b;
}

/* composer */

.composer {
  display: flex;
  align-items: center;
  padding: 21px 29px 93px 17px;
}

.icon svg {
  fill: none;
  stroke: #fff;
  stroke-width: 5;
  stroke-linecap: round;
  stroke-linejoin: round;
}

.plus svg {
  width: 58px;
  height: 58px;
}

.field {
  flex: 1;
  min-width: 0;
  display: flex;
  align-items: center;
  height: 87px;
  margin: 0 53px 0 39px;
  padding: 0 34px;
  border: 1px solid #323232;
  border-radius: 44px;
  background: #282828;
}

.field input {
  flex: 1;
  min-width: 0;
  border: none;
  outline: none;
  background: none;
  color: inherit;
  font: inherit;
}

.icon .stickers {
  width: 52px;
  height: 52px;
  stroke-width: 4;
}

.camera svg {
  width: 68px;
  height: 54px;
}

.camera .flash {
  fill: #fff;
  stroke: none;
}

.mic {
  margin-left: 54px;
}

.mic svg {
  width: 46px;
  height: 68px;
}
```
